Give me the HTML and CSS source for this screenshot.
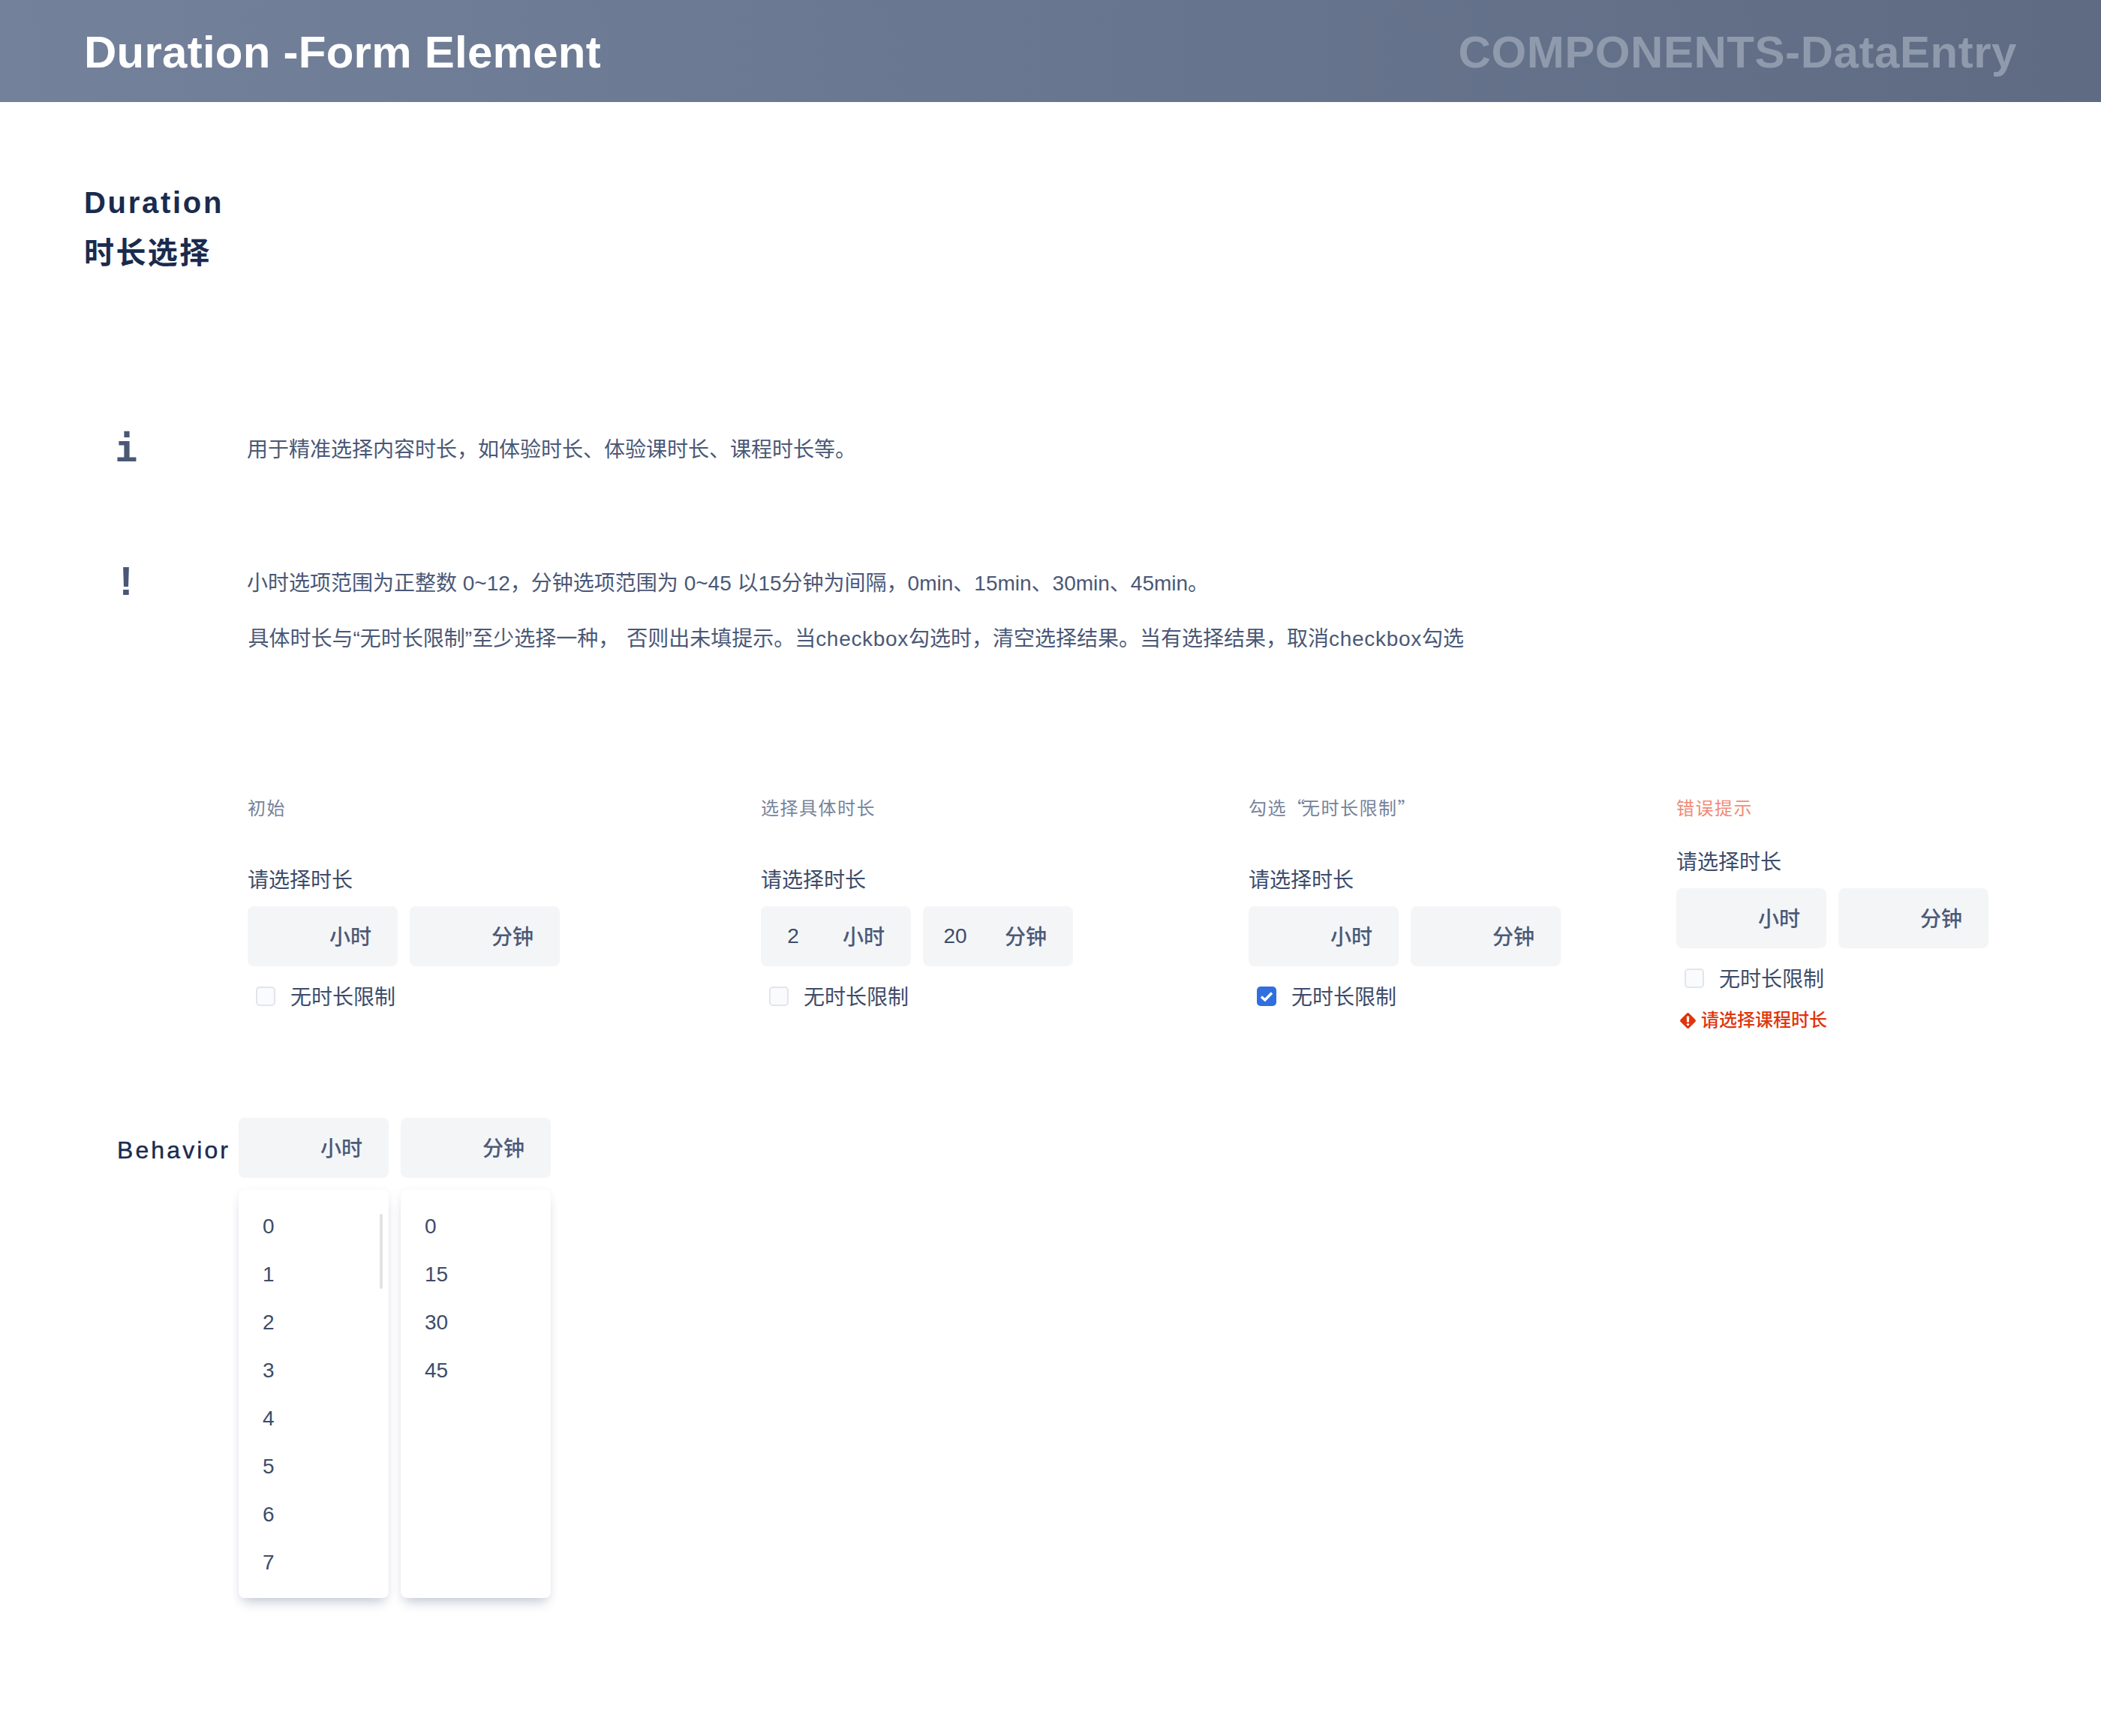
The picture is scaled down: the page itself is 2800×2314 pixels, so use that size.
FILE: index.html
```html
<!DOCTYPE html>
<html>
<head>
  <meta charset="utf-8">
  <title>Duration - Form Element</title>
  <link rel="stylesheet" href="styles.css">
</head>
<body>

  <div class="header">
    <div class="header-title">Duration -Form Element</div>
    <div class="header-group">COMPONENTS-DataEntry</div>
  </div>

  <div class="heading">
    <div class="heading-en">Duration</div>
    <div class="heading-cn">时长选择</div>
  </div>

  <!-- Notes -->
  <div class="note note-info">
    <div class="note-icon note-icon-i">i</div>
    <div class="note-text">
      <p>用于精准选择内容时长，如体验时长、体验课时长、课程时长等。</p>
    </div>
  </div>
  <div class="note note-warn">
    <div class="note-icon note-icon-mark">!</div>
    <div class="note-text">
      <p>小时选项范围为正整数 0~12，分钟选项范围为 0~45 以15分钟为间隔，0min、15min、30min、45min。</p>
      <p class="note-second">具体时长与“无时长限制”至少选择一种，<span class="note-gap"></span>否则出未填提示。当<span class="note-latin">checkbox</span>勾选时，清空选择结果。当有选择结果，取消<span class="note-latin">checkbox</span>勾选</p>
    </div>
  </div>

  <!-- States -->
  <div class="states">
    <div class="state">
      <div class="state-caption">初始</div>
      <div class="state-label">请选择时长</div>
      <div class="fields">
        <div class="field"><span class="field-value"></span><span class="field-unit">小时</span></div>
        <div class="field"><span class="field-value"></span><span class="field-unit">分钟</span></div>
      </div>
      <div class="check"><span class="check-box"></span>无时长限制</div>
    </div>

    <div class="state">
      <div class="state-caption">选择具体时长</div>
      <div class="state-label">请选择时长</div>
      <div class="fields">
        <div class="field"><span class="field-value">2</span><span class="field-unit">小时</span></div>
        <div class="field"><span class="field-value">20</span><span class="field-unit">分钟</span></div>
      </div>
      <div class="check"><span class="check-box"></span>无时长限制</div>
    </div>

    <div class="state">
      <div class="state-caption">勾选<span class="cjk-quote">“</span>无时长限制<span class="cjk-quote">”</span></div>
      <div class="state-label">请选择时长</div>
      <div class="fields">
        <div class="field"><span class="field-value"></span><span class="field-unit">小时</span></div>
        <div class="field"><span class="field-value"></span><span class="field-unit">分钟</span></div>
      </div>
      <div class="check">
        <span class="check-box check-box-on">
          <svg width="18" height="14" viewBox="0 0 18 14"><path d="M2 7.5 L6.8 12 L16 2.5" fill="none" stroke="#fff" stroke-width="3.4"/></svg>
        </span>无时长限制
      </div>
    </div>

    <div class="state state-error">
      <div class="state-caption">错误提示</div>
      <div class="state-label">请选择时长</div>
      <div class="fields">
        <div class="field"><span class="field-value"></span><span class="field-unit">小时</span></div>
        <div class="field"><span class="field-value"></span><span class="field-unit">分钟</span></div>
      </div>
      <div class="check"><span class="check-box"></span>无时长限制</div>
      <div class="error">
        <svg width="21" height="21" viewBox="0 0 21 21">
          <rect x="2.5" y="2.5" width="16" height="16" rx="2.5" transform="rotate(45 10.5 10.5)" fill="#e0340c"/>
          <rect x="8.9" y="4.4" width="3.2" height="8.2" rx="1.2" fill="#fff"/>
          <circle cx="10.5" cy="15.6" r="1.7" fill="#fff"/>
        </svg>
        请选择课程时长
      </div>
    </div>
  </div>

  <!-- Behavior -->
  <div class="behavior">
    <div class="behavior-label">Behavior</div>
    <div class="behavior-grid">
      <div class="field"><span class="field-value"></span><span class="field-unit">小时</span></div>
      <div class="field"><span class="field-value"></span><span class="field-unit">分钟</span></div>
      <div class="panel">
        <div class="panel-item">0</div>
        <div class="panel-item">1</div>
        <div class="panel-item">2</div>
        <div class="panel-item">3</div>
        <div class="panel-item">4</div>
        <div class="panel-item">5</div>
        <div class="panel-item">6</div>
        <div class="panel-item">7</div>
        <div class="panel-scroll"></div>
      </div>
      <div class="panel">
        <div class="panel-item">0</div>
        <div class="panel-item">15</div>
        <div class="panel-item">30</div>
        <div class="panel-item">45</div>
      </div>
    </div>
  </div>

</body>
</html>
```

FILE: styles.css
```css
body {
  margin: 0;
  background: white;
  color: #3d4c6a;
  font-family: "Liberation Sans", "Noto Sans CJK SC", sans-serif;
  font-size: 28px;
}
p {
  margin: 0;
}

.header {
  display: flex;
  justify-content: space-between;
  align-items: center;
  box-sizing: border-box;
  height: 136px;
  padding: 3px 112px 0 112px;
  background: linear-gradient(90deg, #74819b, #5e6b83);
  font-size: 60px;
  font-weight: bold;
}
.header-title {
  color: white;
  letter-spacing: 0.25px;
}
.header-group {
  color: #8f9aad;
  letter-spacing: 0.55px;
}

.heading {
  padding: 110px 0 0 112px;
  color: #1a2b4e;
  font-size: 40px;
  font-weight: bold;
  letter-spacing: 2.7px;
  line-height: 48px;
}
.heading-cn {
  margin-top: 19px;
  letter-spacing: 2.4px;
}

.note {
  display: grid;
  grid-template-columns: 56px 1fr;
  column-gap: 133px;
  padding-left: 140px;
  color: #4a5876;
  line-height: 44px;
}
.note-info {
  margin-top: 217px;
}
.note-warn {
  margin-top: 134px;
}
.note-second {
  margin-top: 30px;
  padding-left: 1.5px;
}
.note-gap {
  padding-right: 10px;
}
.note-latin {
  letter-spacing: 0.7px;
}
.note-icon {
  height: 44px;
  margin-top: -2px;
  text-align: center;
  font-weight: bold;
  font-size: 50px;
}
.note-icon-i {
  font-family: "DejaVu Sans Mono", monospace;
}
.note-icon-mark {
  margin-top: -4px;
  font-size: 54px;
}

.states {
  display: grid;
  grid-template-columns: 684px 650px 570px 1fr;
  margin-top: 188px;
  padding-left: 330px;
}
.state-caption {
  color: #77839a;
  font-size: 24px;
  letter-spacing: 1.5px;
  line-height: 32px;
  margin-bottom: 60px;
}
.cjk-quote {
  font-family: "Noto Sans CJK SC", sans-serif;
  letter-spacing: -4px;
  line-height: 0;
}
.state-label {
  line-height: 40px;
}
.state-error .state-caption {
  color: #f28a75;
  margin-bottom: 36px;
}

.fields {
  display: flex;
  gap: 16px;
  margin-top: 14px;
}
.field {
  display: flex;
  align-items: center;
  width: 200px;
  height: 80px;
  border-radius: 8px;
  background: #f4f5f7;
}
.field-value {
  width: 86px;
  text-align: center;
}
.field-unit {
  margin-left: auto;
  padding-right: 35px;
  padding-bottom: 2px;
  color: #4b5a77;
  font-weight: 500;
}

.check {
  display: flex;
  align-items: center;
  gap: 20px;
  margin-top: 22px;
  padding-left: 11px;
  line-height: 40px;
}
.check-box {
  display: flex;
  align-items: center;
  justify-content: center;
  box-sizing: border-box;
  width: 26px;
  height: 26px;
  margin-top: -4px;
  border: 2px solid #e3e5ea;
  border-radius: 5px;
  background: #fafbfd;
}
.check-box-on {
  border: 0;
  background: #2f6fe0;
}

.error {
  display: flex;
  align-items: center;
  gap: 7px;
  margin-top: 18px;
  padding-left: 5px;
  color: #e0340c;
  font-size: 24px;
  font-weight: 500;
  line-height: 32px;
}

.behavior {
  display: flex;
  margin-top: 114px;
  padding-left: 156px;
  padding-bottom: 184px;
}
.behavior-label {
  width: 162px;
  padding-top: 23px;
  color: #1a2b4e;
  font-size: 32px;
  letter-spacing: 3.1px;
  line-height: 40px;
  -webkit-text-stroke: 0.4px #1a2b4e;
}
.behavior-grid {
  display: grid;
  grid-template-columns: 200px 200px;
  column-gap: 16px;
  row-gap: 16px;
}
.panel {
  position: relative;
  box-sizing: border-box;
  height: 544px;
  padding-top: 17px;
  border-radius: 8px;
  background: white;
  box-shadow: 0 2px 12px rgba(40, 60, 100, 0.07), 0 12px 16px -6px rgba(40, 60, 100, 0.22);
}
.panel-item {
  height: 64px;
  padding-left: 32px;
  line-height: 64px;
}
.panel-scroll {
  position: absolute;
  top: 32px;
  right: 8px;
  width: 4px;
  height: 100px;
  border-radius: 2px;
  background: #e2e2e2;
}
```
